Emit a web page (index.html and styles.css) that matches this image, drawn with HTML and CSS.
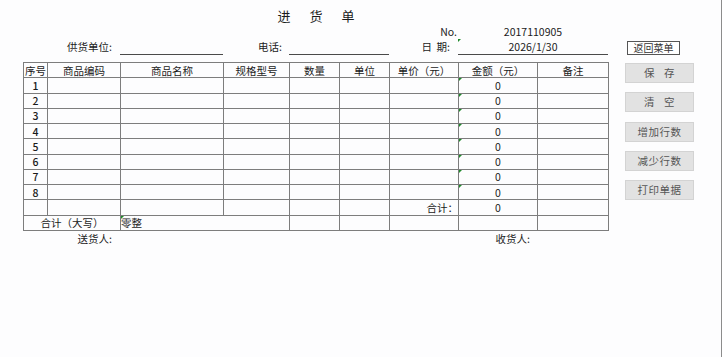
FILE: index.html
```html
<!DOCTYPE html>
<html lang="zh-CN">
<head>
    <meta charset="UTF-8">
    <title>进货单</title>
    <link rel="stylesheet" href="styles.css">
</head>
<body>

<div class="sheet">
    <div class="form">
        <div class="title">进货单</div>

        <div class="meta">
            <span class="no-lbl">No.</span>
            <span class="no-val">2017110905</span>
        </div>

        <div class="meta info">
            <span class="lbl supplier-lbl">供货单位:</span>
            <span class="field supplier"></span>
            <span class="lbl phone-lbl">电话:</span>
            <span class="field phone"></span>
            <span class="lbl date-lbl">日&nbsp;&nbsp;期:</span>
            <span class="field date mark">2026/1/30</span>
        </div>

        <table class="grid">
            <colgroup>
                <col style="width:24px">
                <col style="width:73px">
                <col style="width:103px">
                <col style="width:66px">
                <col style="width:50px">
                <col style="width:50px">
                <col style="width:69px">
                <col style="width:79px">
                <col style="width:71px">
            </colgroup>
            <tr>
                <td>序号</td><td>商品编码</td><td>商品名称</td><td>规格型号</td><td>数量</td>
                <td>单位</td><td>单价（元）</td><td>金额（元）</td><td>备注</td>
            </tr>
            <tr><td class="num">1</td><td></td><td></td><td></td><td></td><td></td><td></td><td class="mark">0</td><td></td></tr>
            <tr><td class="num">2</td><td></td><td></td><td></td><td></td><td></td><td></td><td class="mark">0</td><td></td></tr>
            <tr><td class="num">3</td><td></td><td></td><td></td><td></td><td></td><td></td><td class="mark">0</td><td></td></tr>
            <tr><td class="num">4</td><td></td><td></td><td></td><td></td><td></td><td></td><td class="mark">0</td><td></td></tr>
            <tr><td class="num">5</td><td></td><td></td><td></td><td></td><td></td><td></td><td class="mark">0</td><td></td></tr>
            <tr><td class="num">6</td><td></td><td></td><td></td><td></td><td></td><td></td><td class="mark">0</td><td></td></tr>
            <tr><td class="num">7</td><td></td><td></td><td></td><td></td><td></td><td></td><td class="mark">0</td><td></td></tr>
            <tr><td class="num">8</td><td></td><td></td><td></td><td></td><td></td><td></td><td class="mark">0</td><td></td></tr>
            <tr><td></td><td></td><td></td><td></td><td></td><td></td><td class="sum-lbl">合计：</td><td>0</td><td></td></tr>
            <tr>
                <td colspan="2">合计（大写）</td>
                <td colspan="2" class="words mark">零整</td>
                <td></td><td></td><td></td><td></td><td></td>
            </tr>
        </table>

        <div class="meta sign">
            <span class="sender">送货人:</span>
            <span class="receiver">收货人:</span>
        </div>
    </div>

    <div class="side">
        <button class="back">返回菜单</button>
        <button class="btn wide">保 存</button>
        <button class="btn wide">清 空</button>
        <button class="btn">增加行数</button>
        <button class="btn">减少行数</button>
        <button class="btn">打印单据</button>
    </div>
</div>

</body>
</html>
```

FILE: styles.css
```css
* {
    margin: 0;
    padding: 0;
    box-sizing: border-box;
}

body {
    background: #fdfdfe;
    font-family: "Noto Sans CJK SC", "Noto Sans", sans-serif;
    font-size: 10.5px;
    color: #1b1b1b;
}

.sheet {
    display: flex;
    width: 722px;
    height: 357px;
    border-right: 1px solid #8c8c8c;
}

.form {
    width: 609px;
    padding-left: 23px;
}

.title {
    height: 24px;
    padding: 6px 0 0 19px;
    line-height: 20px;
    font-size: 13px;
    letter-spacing: 19px;
    text-align: center;
}

/* header rows share the table's columns */
.meta {
    display: grid;
    grid-template-columns: 24px 73px 103px 66px 50px 50px 69px 79px 71px;
    height: 15px;
    line-height: 15px;
    white-space: nowrap;
}

.no-lbl {
    grid-column: 7 / 8;
    text-align: right;
    padding-right: 1px;
}

.no-val {
    grid-column: 8 / 10;
    text-align: center;
}

.info {
    height: 16px;
    margin-bottom: 7px;
}

.lbl {
    text-align: right;
}

.supplier-lbl {
    grid-column: 1 / 3;
    padding-right: 8px;
}

.phone-lbl {
    grid-column: 4 / 5;
    padding-right: 7px;
}

.date-lbl {
    grid-column: 7 / 8;
    padding-right: 8px;
}

.field {
    border-bottom: 1px solid #4a4a4a;
}

.supplier { grid-column: 3 / 4; }
.phone { grid-column: 5 / 7; }

.date {
    grid-column: 8 / 10;
    text-align: center;
}

.grid {
    width: 586px;
    border-collapse: collapse;
    table-layout: fixed;
}

.grid td {
    height: 15.27px;
    padding: 0;
    border: 1px solid #7d7d7d;
    text-align: center;
    line-height: 13px;
    white-space: nowrap;
    overflow: hidden;
}

.grid .num {
    font-weight: 500;
}

.grid .sum-lbl {
    text-align: right;
}

.grid .words {
    text-align: left;
}

/* little green corner flags like spreadsheet cells */
.mark {
    position: relative;
}

.mark::before {
    content: "";
    position: absolute;
    left: 0;
    top: 0;
    border-top: 3px solid #1f8a2a;
    border-right: 3px solid transparent;
}

.sign .sender {
    grid-column: 1 / 3;
    text-align: right;
    padding-right: 8px;
}

.sign .receiver {
    grid-column: 8 / 9;
    text-align: right;
    padding-right: 7px;
}

.side {
    display: flex;
    flex-direction: column;
    align-items: flex-start;
    margin-left: 16px;
    padding-top: 41px;
}

button {
    font-family: "Noto Sans CJK SC", "Noto Sans", sans-serif;
    cursor: pointer;
}

.back {
    width: 53px;
    height: 14px;
    margin: 0 0 8px 2px;
    border: 1px solid #555;
    background: #fff;
    color: #333;
    font-size: 10px;
    line-height: 12px;
}

.btn {
    width: 69px;
    height: 20px;
    margin-bottom: 9.3px;
    border: 1px solid #d3d3d3;
    background: #e2e2e2;
    color: #555;
    font-size: 10.5px;
    line-height: 18px;
    letter-spacing: 0.5px;
}

.btn.wide {
    word-spacing: 6px;
}
```
